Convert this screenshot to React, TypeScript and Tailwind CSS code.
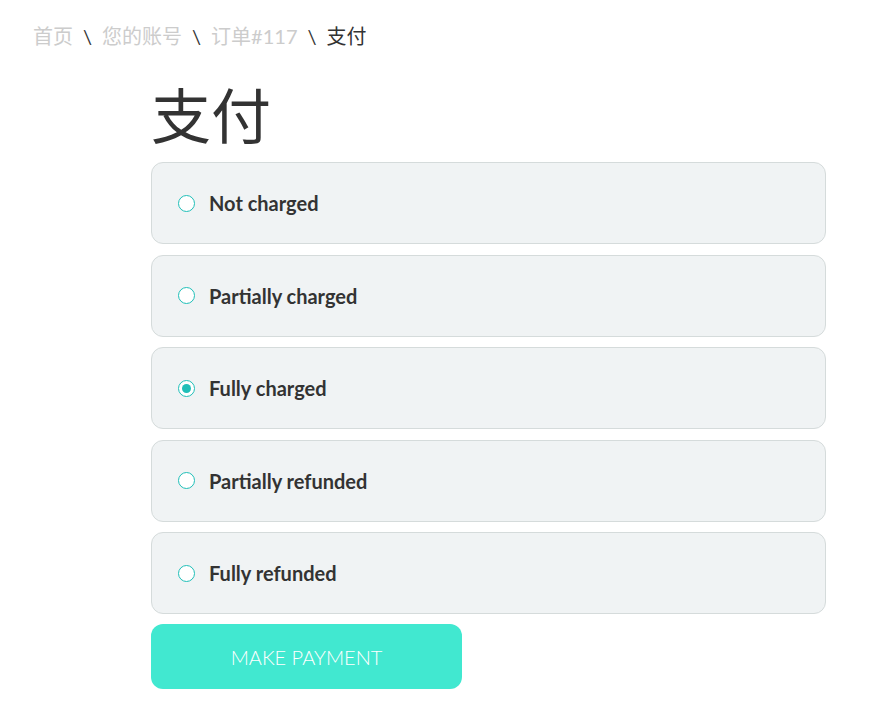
import { useState } from "react";

const options = [
  "Not charged",
  "Partially charged",
  "Fully charged",
  "Partially refunded",
  "Fully refunded",
];

export default function App() {
  const [selected, setSelected] = useState("Fully charged");

  return (
    <div className="min-h-screen bg-white font-['Lato','Noto_Sans_CJK_SC',sans-serif] text-[#333]">
      {/* Breadcrumb */}
      <nav className="flex items-center gap-[10px] px-[33px] pt-[22px] text-[20px] leading-[28px]">
        <span className="text-[#cccccc]">首页</span>
        <span className="text-[#333]">\</span>
        <span className="text-[#cccccc]">您的账号</span>
        <span className="text-[#333]">\</span>
        <span className="text-[#cccccc]">订单#117</span>
        <span className="text-[#333]">\</span>
        <span className="text-[#333]">支付</span>
      </nav>

      <div className="ml-[151px] w-[675px]">
        <h1 className="mt-[33px] mb-[13px] text-[60px] leading-[66px] font-normal text-[#333]">
          支付
        </h1>

        <div className="flex flex-col gap-[10.5px]">
          {options.map((opt) => (
            <label
              key={opt}
              className="flex h-[82px] cursor-pointer items-center rounded-[12px] border border-[#d5dbdb] bg-[#f0f3f4] pl-[26px]"
            >
              <input
                type="radio"
                name="payment"
                checked={selected === opt}
                onChange={() => setSelected(opt)}
                className="sr-only"
              />
              <span className="flex h-[17px] w-[17px] items-center justify-center rounded-full border border-[#1fbfb8] bg-white">
                {selected === opt && (
                  <span className="h-[9px] w-[9px] rounded-full bg-[#1fbfb8]" />
                )}
              </span>
              <span className="ml-[14px] text-[20px] font-bold text-[#333]">
                {opt}
              </span>
            </label>
          ))}
        </div>

        <button
          type="button"
          className="mt-[10px] h-[65px] w-[311px] rounded-[12px] bg-[#41e8d0] text-[20px] font-light text-white"
        >
          MAKE PAYMENT
        </button>
      </div>
    </div>
  );
}
